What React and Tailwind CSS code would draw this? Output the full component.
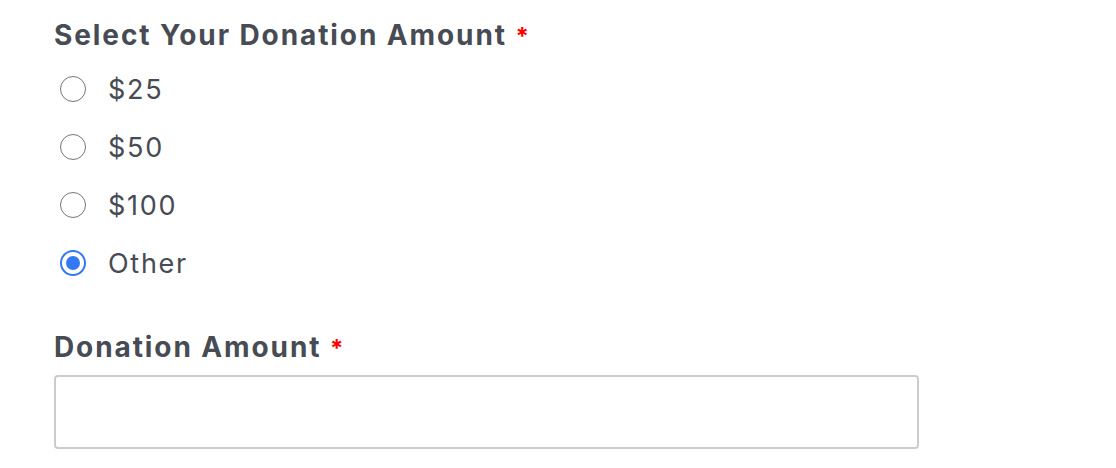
import React, { useState } from 'react';

const opciones = ['$25', '$50', '$100', 'Other'];

const Radio = ({ checked }) => (
  checked ? (
    <span className="flex items-center justify-center w-[26px] h-[26px] rounded-full border-[2.5px] border-[#3478f6] bg-white">
      <span className="w-[14px] h-[14px] rounded-full bg-[#3478f6]"></span>
    </span>
  ) : (
    <span className="block w-[26px] h-[26px] rounded-full border-[1.5px] border-[#767676] bg-white"></span>
  )
);

const App = () => {
  const [seleccion, setSeleccion] = useState('Other');
  const [monto, setMonto] = useState('');
  return (
    <div className="w-[1116px] h-[468px] bg-white pl-[54px] pt-[18px] text-[#474b54]" style={{ fontFamily: 'Inter, "Noto Sans", sans-serif' }}>
      {/* pregunta */}
      <p className="h-[34px] text-[28px] leading-[34px] font-bold tracking-[1.9px]">
        Select Your Donation Amount <span className="text-[#ff0000] text-[24px] leading-none">*</span>
      </p>
      <div className="mt-[8px] flex flex-col">
        {opciones.map(item => (
          <label
            key={item}
            className="h-[58px] flex items-center cursor-pointer"
            onClick={() => setSeleccion(item)}
          >
            <span className="w-[38px] pl-[6px]">
              <Radio checked={seleccion === item} />
            </span>
            <span className="ml-[16px] text-[27px] leading-none tracking-[1.7px]">{item}</span>
          </label>
        ))}
      </div>
      {/* monto */}
      <p className="h-[34px] mt-[38px] text-[28px] leading-[34px] font-bold tracking-[1.9px]">
        Donation Amount <span className="text-[#ff0000] text-[24px] leading-none">*</span>
      </p>
      <input
        className="mt-[11px] block w-[865px] h-[74px] border-2 border-[#cccccc] rounded-[4px] px-4 text-[24px] focus:outline-none"
        value={monto}
        onChange={e => setMonto(e.target.value)}
      />
    </div>
  );
};

export default App;
